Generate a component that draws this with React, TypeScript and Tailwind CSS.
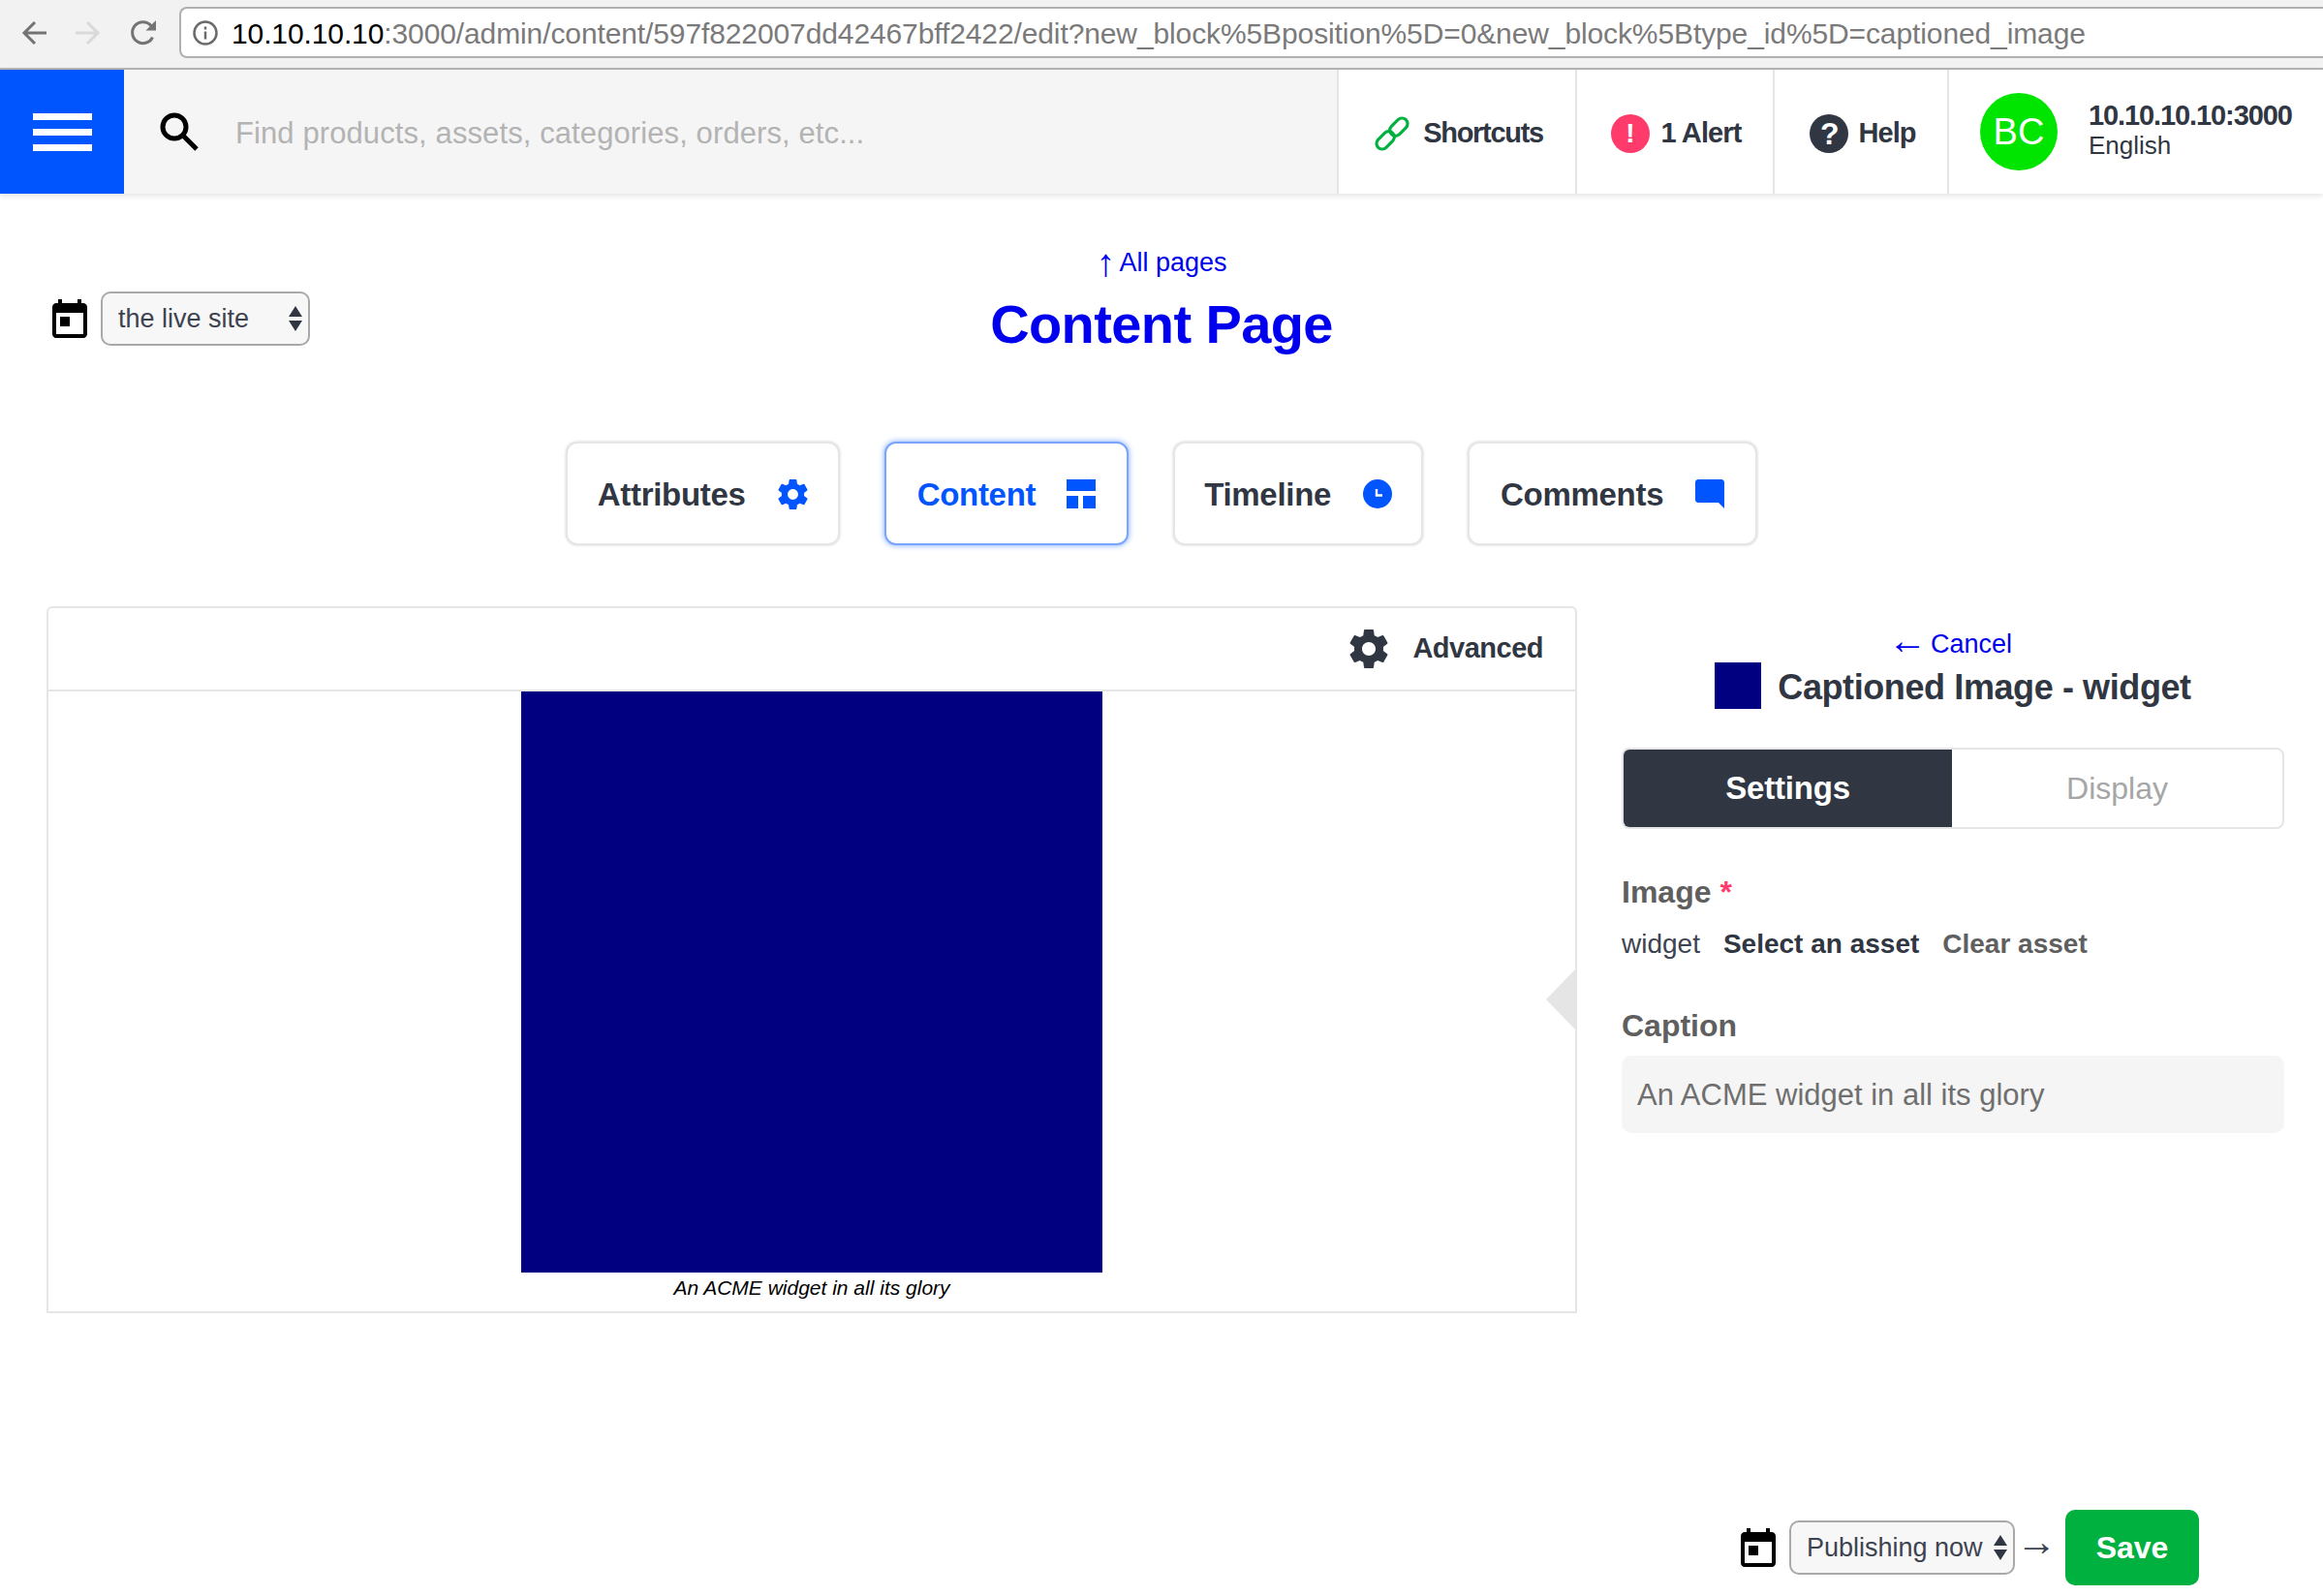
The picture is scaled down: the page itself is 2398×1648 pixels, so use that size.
import React from 'react';

const settingsPath =
  'M19.43 12.98c.04-.32.07-.64.07-.98s-.03-.66-.07-.98l2.11-1.65c.19-.15.24-.42.12-.64l-2-3.46c-.12-.22-.39-.3-.61-.22l-2.49 1c-.52-.4-1.08-.73-1.69-.98l-.38-2.65C14.46 2.18 14.25 2 14 2h-4c-.25 0-.46.18-.49.42l-.38 2.65c-.61.25-1.17.59-1.69.98l-2.49-1c-.23-.09-.49 0-.61.22l-2 3.46c-.13.22-.07.49.12.64l2.11 1.65c-.04.32-.07.65-.07.98s.03.66.07.98l-2.11 1.65c-.19.15-.24.42-.12.64l2 3.46c.12.22.39.3.61.22l2.49-1c.52.4 1.08.73 1.69.98l.38 2.65c.03.24.24.42.49.42h4c.25 0 .46-.18.49-.42l.38-2.65c.61-.25 1.17-.59 1.69-.98l2.49 1c.23.09.49 0 .61-.22l2-3.46c.12-.22.07-.49-.12-.64l-2.11-1.65zM12 15.5c-1.93 0-3.5-1.57-3.5-3.5s1.57-3.5 3.5-3.5 3.5 1.57 3.5 3.5-1.57 3.5-3.5 3.5z';

function TodayIcon() {
  return (
    <svg viewBox="3 1 18 20" className="w-[36px] h-[40px] shrink-0" fill="#000">
      <path d="M19 3h-1V1h-2v2H8V1H6v2H5c-1.11 0-1.99.9-1.99 2L3 19c0 1.1.89 2 2 2h14c1.1 0 2-.9 2-2V5c0-1.1-.9-2-2-2zm0 16H5V8h14v11zM7 10h5v5H7z" />
    </svg>
  );
}

function UpDown() {
  return (
    <svg viewBox="0 0 14 26" className="w-[14px] h-[26px] shrink-0" fill="#303642">
      <path d="M7 0l7 11H0zM7 26L0 15h14z" />
    </svg>
  );
}

function FakeSelect({ label, width, gap }: { label: string; width: string; gap: string }) {
  return (
    <div className={`flex items-center ${gap}`}>
      <TodayIcon />
      <div className={`${width} h-[56px] flex items-center justify-between pl-[16px] pr-[6px] bg-[#f7f7f7] border-2 border-[#a9a9a9] rounded-[10px] text-[27px] font-light text-[#3d4350]`}>
        <span>{label}</span>
        <UpDown />
      </div>
    </div>
  );
}

function TabButton({ label, padding, active, children }: { label: string; padding: string; active?: boolean; children: React.ReactNode }) {
  return (
    <div
      className={
        active
          ? `h-[107px] pt-[34px] ${padding} flex items-start gap-[32px] bg-white rounded-[12px] border-2 border-[#7aa5ff] shadow-[0_0_6px_#7aa5ff] text-[#0055ff]`
          : `h-[107px] pt-[34px] ${padding} flex items-start gap-[33px] bg-white rounded-[12px] border-2 border-[#e6e6e6] shadow-[0_0_3px_rgba(0,0,0,0.18)] text-[#303642]`
      }
    >
      <span className="text-[33px] leading-[38px] font-bold tracking-[-0.3px]">{label}</span>
      <span className="mt-[3px]">{children}</span>
    </div>
  );
}

function NavItem({ children, width, gap, inset }: { children: React.ReactNode; width: string; gap: string; inset: string }) {
  return (
    <div className={`${width} h-full flex items-center justify-center ${gap} ${inset} pt-[3px] border-l-2 border-[#e5e5e5] text-[29px] font-bold tracking-[-0.9px] text-[#303642]`}>
      {children}
    </div>
  );
}

export default function App() {
  return (
    <div className="w-[2398px] h-[1648px] overflow-hidden bg-white font-['Liberation_Sans',Arial,sans-serif]">
      {/* Browser toolbar */}
      <div className="h-[72px] bg-[#f2f2f2] border-b-2 border-[#b5b5b5] pt-[7px] flex items-start">
        <div className="w-[185px] h-[53px] flex items-center pl-[22px] gap-[30px] shrink-0">
          <svg viewBox="0 0 26 26" className="w-[26px] h-[26px]" fill="none" stroke="#737373" strokeWidth="3">
            <path d="M26 13H3M14 2L3 13l11 11" />
          </svg>
          <svg viewBox="0 0 26 26" className="w-[26px] h-[26px]" fill="none" stroke="#d9d9d9" strokeWidth="3">
            <path d="M0 13h23M12 2l11 11-11 11" />
          </svg>
          <svg viewBox="0 0 28 28" className="w-[28px] h-[28px]" fill="none" stroke="#737373" strokeWidth="3">
            <path d="M23.5 18.5A11 11 0 1 1 22 6.5" />
            <path d="M27 1v10.5H16.5z" fill="#737373" stroke="none" />
          </svg>
        </div>
        <div className="flex-1 h-[53px] bg-white border-2 border-r-0 border-[#b0b0b0] rounded-l-[8px] flex items-center pl-[12px] gap-[14px]">
          <svg viewBox="0 0 26 26" className="w-[26px] h-[26px] shrink-0" fill="none" stroke="#6b6b6b" strokeWidth="2.5">
            <circle cx="13" cy="13" r="11.5" />
            <path d="M13 11.5v8M13 6.5v3" />
          </svg>
          <span className="text-[30px] pt-[2px] whitespace-nowrap text-[#7a7a7a] tracking-[-0.11px]">
            <span className="text-black">10.10.10.10</span>:3000/admin/content/597f822007dd42467bff2422/edit?new_block%5Bposition%5D=0&new_block%5Btype_id%5D=captioned_image
          </span>
        </div>
      </div>

      {/* Top navigation */}
      <div className="h-[128px] flex bg-white shadow-[0_2px_6px_rgba(0,0,0,0.12)]">
        <div className="w-[128px] bg-[#0055ff] flex flex-col items-center justify-center gap-[9px] shrink-0">
          <div className="w-[61px] h-[7px] bg-white" />
          <div className="w-[61px] h-[7px] bg-white" />
          <div className="w-[61px] h-[7px] bg-white" />
        </div>
        <div className="flex-1 bg-[#f5f5f5] flex items-center pl-[37px] gap-[38px]">
          <svg viewBox="0 0 40 40" className="w-[40px] h-[40px] shrink-0" fill="none" stroke="#000" strokeWidth="5">
            <circle cx="15" cy="15" r="12" />
            <path d="M24 24l14 14" />
          </svg>
          <span className="text-[31px] pt-[4px] font-light text-[#b3b3b3] tracking-[0.1px]">Find products, assets, categories, orders, etc...</span>
        </div>
        <NavItem width="w-[246px]" gap="gap-[13px]" inset="pl-[3px]">
          <svg viewBox="0 0 36 36" className="w-[38px] h-[38px]" fill="none" stroke="#00b140" strokeWidth="3">
            <rect x="1.5" y="19" width="20" height="11" rx="5.5" transform="rotate(-45 11.5 24.5)" />
            <rect x="14.5" y="6" width="20" height="11" rx="5.5" transform="rotate(-45 24.5 11.5)" />
          </svg>
          <span className="tracking-[-1.3px]">Shortcuts</span>
        </NavItem>
        <NavItem width="w-[204px]" gap="gap-[12px]" inset="pl-[2px]">
          <span className="w-[40px] h-[40px] rounded-full bg-[#ff3b6c] text-white flex items-center justify-center text-[28px] font-bold">!</span>
          <span>1 Alert</span>
        </NavItem>
        <NavItem width="w-[180px]" gap="gap-[10px]" inset="pl-[4px]">
          <span className="w-[40px] h-[40px] rounded-full bg-[#303642] text-white flex items-center justify-center text-[32px] font-bold">?</span>
          <span>Help</span>
        </NavItem>
        <div className="w-[388px] h-full flex items-center pl-[32px] gap-[32px] border-l-2 border-[#e5e5e5]">
          <div className="w-[80px] h-[80px] rounded-full bg-[#00e500] text-white flex items-center justify-center text-[38px] font-light shrink-0">BC</div>
          <div className="text-[#303642] pb-[6px]">
            <div className="text-[29px] leading-[34px] font-bold tracking-[-1.1px]">10.10.10.10:3000</div>
            <div className="text-[26px] leading-[29px]">English</div>
          </div>
        </div>
      </div>

      {/* Page title */}
      <div className="grid grid-cols-[1fr_auto_1fr] px-[54px] pt-[54px]">
        <div className="pt-[47px]">
          <FakeSelect label="the live site" width="w-[216px]" gap="gap-[14px]" />
        </div>
        <div className="flex flex-col items-center">
          <span className="h-[34px] flex items-center gap-[4px] text-[27px] leading-[34px] text-[#0000ee] font-light">
            <span className="text-[40px] leading-[34px]">↑</span>
            <span>All pages</span>
          </span>
          <h1 className="text-[56px] leading-[64px] mt-[15px] font-bold text-[#0000ee] tracking-[-0.6px]">Content Page</h1>
        </div>
        <div />
      </div>

      {/* Tabs */}
      <div className="flex justify-center gap-[46px] mt-[89px]">
        <TabButton label="Attributes" padding="px-[31px]">
          <svg viewBox="3 2 18 20" className="w-[31px] h-[31px]" fill="#0055ff"><path d={settingsPath} /></svg>
        </TabButton>
        <TabButton label="Content" padding="px-[32px]" active>
          <svg viewBox="0 0 30 30" className="w-[30px] h-[30px]" fill="#0055ff">
            <path d="M0 0h30v12H0zM0 17h12v13H0zM17 17h13v13H17z" />
          </svg>
        </TabButton>
        <TabButton label="Timeline" padding="px-[30px]">
          <svg viewBox="0 0 30 30" className="w-[30px] h-[30px]">
            <circle cx="15" cy="15" r="15" fill="#0055ff" />
            <path d="M14 10v6.5h6" fill="none" stroke="#fff" strokeWidth="2.4" />
          </svg>
        </TabButton>
        <TabButton label="Comments" padding="px-[32px]">
          <svg viewBox="2 2 20 20" className="w-[30px] h-[30px]" fill="#0055ff">
            <path d="M21.99 4c0-1.1-.89-2-1.99-2H4c-1.1 0-2 .9-2 2v12c0 1.1.9 2 2 2h14l4 4-.01-18z" />
          </svg>
        </TabButton>
      </div>

      {/* Editor */}
      <div className="flex pl-[48px] pr-[40px] gap-[46px] mt-[63px]">
        <div className="relative w-[1580px] h-[730px] shrink-0 border-2 border-[#e5e5e5] rounded-t-[6px]">
          <div className="h-[86px] border-b-2 border-[#e5e5e5] flex items-center justify-end pr-[33px] gap-[25px]">
            <svg viewBox="3 2 18 20" className="w-[40px] h-[40px]" fill="#303642"><path d={settingsPath} /></svg>
            <span className="text-[29px] font-bold text-[#303642] tracking-[-0.5px]">Advanced</span>
          </div>
          <div className="flex flex-col items-center">
            <div className="w-[600px] h-[600px] bg-[#000080]" />
            <span className="text-[21px] leading-[32px] italic text-black">An ACME widget in all its glory</span>
          </div>
          <div className="absolute right-[-2px] top-[371px] w-0 h-0 border-y-[33px] border-y-transparent border-r-[32px] border-r-[#e5e5e5]" />
        </div>

        <div className="flex-1 pt-[22px]">
          <div className="flex flex-col items-center">
            <span className="h-[34px] flex items-center gap-[4px] pr-[6px] text-[27px] leading-[34px] text-[#0000ee] font-light">
              <span className="text-[40px] leading-[34px] -mt-[9px]">←</span>
              <span>Cancel</span>
            </span>
            <div className="flex items-center gap-[17px] mt-[2px] h-[48px]">
              <div className="w-[48px] h-[48px] bg-[#000080]" />
              <span className="text-[36px] pt-[3px] font-bold text-[#303642] tracking-[-0.4px]">Captioned Image - widget</span>
            </div>
          </div>

          <div className="flex h-[84px] mt-[40px] border-2 border-[#e5e5e5] rounded-[8px] overflow-hidden">
            <div className="w-[339px] bg-[#303642] text-white text-[33px] font-bold tracking-[-0.2px] flex items-center justify-center">Settings</div>
            <div className="flex-1 text-[#a6a6a6] text-[32px] font-light flex items-center justify-center">Display</div>
          </div>

          <div className="text-[32px] leading-[40px] font-bold text-[#5f5f5f] mt-[45px]">
            Image <span className="text-[#ff3b6c]">*</span>
          </div>
          <div className="flex text-[28px] leading-[36px] mt-[16px]">
            <span className="text-[#3d4350] mr-[24px]">widget</span>
            <span className="font-bold text-[#303642] mr-[24px]">Select an asset</span>
            <span className="font-bold text-[#5f5f5f]">Clear asset</span>
          </div>
          <div className="text-[32px] leading-[40px] font-bold text-[#5f5f5f] mt-[46px]">Caption</div>
          <div className="h-[80px] mt-[11px] bg-[#f5f5f5] rounded-[10px] flex items-center pl-[16px] pt-[3px] text-[31px] text-[#6f6f6f]">
            An ACME widget in all its glory
          </div>
        </div>
      </div>

      {/* Publish footer */}
      <div className="flex justify-end items-center pr-[128px] mt-[203px]">
        <FakeSelect label="Publishing now" width="w-[233px]" gap="gap-[14px]" />
        <span className="w-[52px] pl-[1px] pb-[12px] text-[42px] leading-none text-[#3d4350]">→</span>
        <div className="w-[138px] h-[78px] rounded-[10px] bg-[#00b140] text-white text-[32px] font-bold flex items-center justify-center">Save</div>
      </div>
    </div>
  );
}
